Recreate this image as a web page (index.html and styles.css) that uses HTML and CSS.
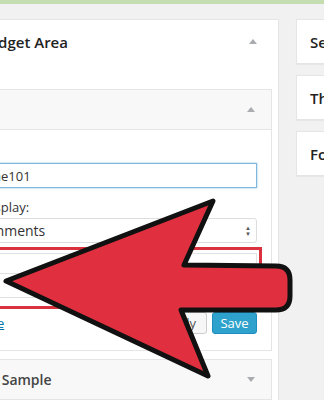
FILE: index.html
```html
<!DOCTYPE html>
<html lang="en">
<head>
<meta charset="UTF-8">
<title>Widgets</title>
<link rel="stylesheet" href="styles.css">
</head>
<body>

<div class="topbar"></div>

<div class="columns">
    <div class="sidebar-panel">
        <div class="panel-head">
            <h2>My Widget Area</h2>
            <span class="tri up"></span>
        </div>

        <div class="widget open">
            <div class="widget-head">
                <h3>Text:</h3>
                <span class="tri up"></span>
            </div>
            <div class="widget-body">
                <label class="field-label">Title:</label>
                <input class="text-field focus" type="text" value="Name101">

                <label class="field-label">To display:</label>
                <div class="select-field">
                    <span>Comments</span>
                    <span class="updown">&#9650;<br>&#9660;</span>
                </div>

                <div class="highlight">
                    <div class="boxed">
                        <div class="boxed-row"></div>
                        <div class="boxed-row"></div>
                    </div>
                </div>

                <div class="actions">
                    <a href="#" class="delete">Delete</a>
                    <div class="buttons">
                        <span class="btn">Apply</span>
                        <span class="btn primary">Save</span>
                    </div>
                </div>
            </div>
        </div>

        <div class="widget">
            <div class="widget-head">
                <h3>Text: Sample</h3>
                <span class="tri down"></span>
            </div>
        </div>
    </div>

    <div class="side">
        <div class="side-box"><h2>Secondary</h2></div>
        <div class="side-box"><h2>Third Area</h2></div>
        <div class="side-box"><h2>Footer</h2></div>
    </div>
</div>

<!-- annotation arrow -->
<svg class="arrow" width="324" height="400" viewBox="0 0 324 400">
    <path d="M6 281 L213 201 L184 265 L276 266 Q290 266 290 280 L290 296 Q290 310 276 310 L181 310 L208 376 Z"
          fill="#e0303f" stroke="#111" stroke-width="5" stroke-linejoin="round"/>
</svg>

</body>
</html>
```

FILE: styles.css
```css
body {
    margin: 0;
    background: #f1f1f1;
    font-family: "Open Sans", Arial, sans-serif;
    color: #222;
    width: 324px;
    height: 400px;
    overflow: hidden;
    position: relative;
}
.topbar {
    height: 4px;
    background: #c5deb1;
}
.columns {
    display: flex;
    gap: 17px;
    margin-left: -55px;
    padding-top: 15px;
}
.sidebar-panel {
    flex: none;
    width: 332px;
    background: #fff;
    border: 1px solid #e5e5e5;
    box-shadow: 0 1px 1px rgba(0, 0, 0, 0.04);
    padding-bottom: 20px;
}
.panel-head {
    height: 43px;
    display: flex;
    align-items: center;
    justify-content: space-between;
    padding: 0 21px 0 8px;
}
.panel-head h2 {
    margin: 0;
    font-size: 15px;
    font-weight: 600;
}
.tri {
    width: 0;
    height: 0;
    border-left: 4px solid transparent;
    border-right: 4px solid transparent;
}
.tri.up {
    border-bottom: 5px solid #a8abaf;
}
.tri.down {
    border-top: 5px solid #a8abaf;
}
.widget {
    margin: 26px 6px 0 3px;
}
.widget + .widget {
    margin-top: 8px;
}
.widget-head {
    height: 39px;
    background: #f8f8f8;
    border: 1px solid #e5e5e5;
    display: flex;
    align-items: center;
    justify-content: space-between;
    padding: 0 16px 0 15px;
}
.widget-head h3 {
    margin: 0;
    font-size: 14px;
    font-weight: 600;
    color: #444;
}
.widget-body {
    background: #fff;
    border: 1px solid #e5e5e5;
    border-top: none;
    padding: 11px 14px 16px 15px;
}
.field-label {
    display: block;
    font-size: 13px;
    line-height: 20px;
    color: #333;
}
.field-label + .text-field {
    margin-top: 2px;
}
.text-field {
    display: block;
    box-sizing: border-box;
    width: 100%;
    height: 25px;
    margin: 0 0 9px;
    padding: 0 6px;
    border: 1px solid #ddd;
    font-family: "Open Sans", Arial, sans-serif;
    font-size: 13px;
    color: #333;
    outline: none;
}
.text-field.focus {
    border-color: #7fb6e0;
    box-shadow: 0 0 2px rgba(30, 140, 190, 0.5);
}
.select-field {
    box-sizing: border-box;
    height: 25px;
    margin-top: 1px;
    padding: 0 5px 0 8px;
    border: 1px solid #ddd;
    border-radius: 3px;
    display: flex;
    align-items: center;
    justify-content: space-between;
    font-size: 14px;
    color: #333;
}
.updown {
    font-size: 6px;
    line-height: 6px;
    color: #555;
    text-align: center;
}
.highlight {
    margin: 4px -5px 0 -6px;
    border: 3px solid #d9323e;
    padding: 3px 2px 8px 5px;
}
.boxed {
    border: 1px solid #e2e2e2;
    background: #fff;
}
.boxed-row {
    height: 19px;
}
.boxed-row + .boxed-row {
    border-top: 1px solid #e2e2e2;
    height: 23px;
}
.actions {
    margin-top: 3px;
    display: flex;
    justify-content: space-between;
    align-items: center;
}
.delete {
    font-size: 13px;
    color: #0074a2;
    align-self: flex-start;
    margin-top: 2px;
}
.buttons {
    display: flex;
    gap: 5px;
}
.btn {
    box-sizing: border-box;
    height: 22px;
    padding: 0 10px;
    line-height: 20px;
    font-size: 13px;
    border: 1px solid #ccc;
    border-radius: 3px;
    background: #f7f7f7;
    color: #555;
}
.btn.primary {
    background: #2ea2cc;
    border-color: #1e8cbe;
    color: #fff;
    width: 45px;
    text-align: center;
    padding: 0;
}
.side {
    display: flex;
    flex-direction: column;
    gap: 11px;
}
.side-box {
    width: 200px;
    height: 43px;
    background: #fff;
    border: 1px solid #e5e5e5;
    box-shadow: 0 1px 1px rgba(0, 0, 0, 0.04);
    display: flex;
    align-items: center;
    padding-left: 13px;
}
.side-box h2 {
    margin: 0;
    font-size: 15px;
    font-weight: 600;
}
.arrow {
    position: absolute;
    top: 0;
    left: 0;
}
```
